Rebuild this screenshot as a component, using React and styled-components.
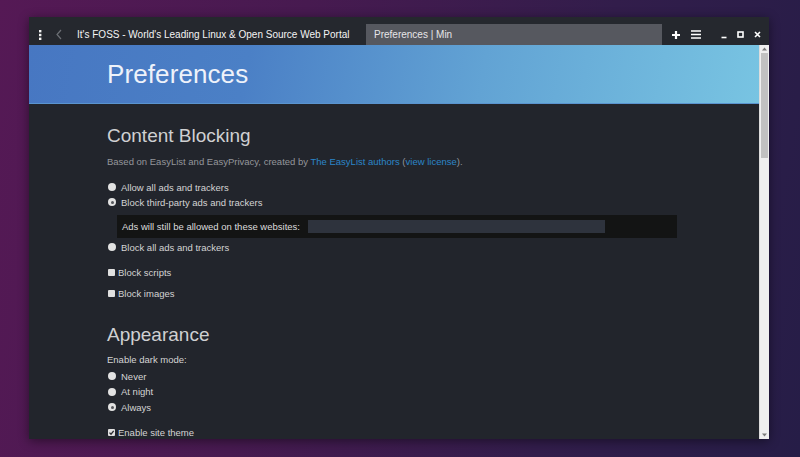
import React from "react";
import styled, { createGlobalStyle } from "styled-components";

const Global = createGlobalStyle`
  html, body { margin: 0; padding: 0; }
  body {
    width: 800px; height: 457px; overflow: hidden;
    font-family: "Liberation Sans", Arial, sans-serif;
  }
  #root { width: 800px; height: 457px; }
`;

const Desktop = styled.div`
  width: 800px; height: 457px; box-sizing: border-box;
  padding: 17px 31px 18px 29px;
  background: linear-gradient(100deg, #551955 0%, #471a50 35%, #321d4b 70%, #261d47 100%);
  display: flex;
`;

const Window = styled.div`
  flex: 1;
  display: flex; flex-direction: column;
  background: #22252c;
  box-shadow: 0 2px 10px rgba(0,0,0,0.45);
  overflow: hidden;
`;

const TitleBar = styled.div`
  height: 28px; flex: none;
  background: #25282e;
  display: flex; align-items: flex-end;
  color: #f2f2f2; font-size: 10px;
`;

const IconBtn = styled.div`
  width: ${p => p.$w || 18}px; height: 21px;
  display: flex; align-items: center; justify-content: center;
  color: ${p => p.$dim ? "#6c6f75" : "#f4f4f4"};
  flex: none;
`;

const Tab = styled.div`
  width: 296px; height: 21px; box-sizing: border-box;
  padding-left: ${p => p.$active ? 8 : 7}px;
  display: flex; align-items: center;
  background: ${p => p.$active ? "#56585f" : "transparent"};
  color: ${p => p.$active ? "#e6e6e8" : "#f4f4f4"};
  white-space: nowrap; overflow: hidden;
  flex: none;
`;

const Spacer = styled.div`
  width: ${p => p.$w}px; flex: none;
`;

const Body = styled.div`
  flex: 1; display: flex; min-height: 0;
`;

const Page = styled.div`
  flex: 1; display: flex; flex-direction: column; overflow: hidden;
`;

const Banner = styled.div`
  height: 58px; flex: none;
  border-bottom: 1px solid #5a94cf;
  background: linear-gradient(100deg, #4777c2 0%, #4b80c6 30%, #62a3d4 62%, #78c4e2 100%);
  padding-left: 78px;
  display: flex; align-items: center;
`;

const PageTitle = styled.h1`
  margin: 0; font-weight: 400; font-size: 26px;
  color: #eef2fa; letter-spacing: 0.1px;
`;

const Content = styled.div`
  padding: 20px 78px 0 78px;
  color: #d6d6d6; font-size: 9.5px;
`;

const Heading = styled.h2`
  margin: 0 0 ${p => p.$mb || 8}px 0;
  font-weight: 400; font-size: 19px; line-height: 24px;
  color: #cfd0d2;
`;

const Desc = styled.p`
  margin: 0 0 13px 0; line-height: 12px;
  color: #94969b;
`;

const Link = styled.a`
  color: #2b85c9; text-decoration: none;
`;

const List = styled.div`
  display: flex; flex-direction: column;
  gap: ${p => p.$gap || 3}px;
  margin-top: ${p => p.$mt || 0}px;
`;

const Row = styled.label`
  display: flex; align-items: center; height: 12px;
  color: #d4d4d4;
`;

const Radio = styled.span`
  width: 8px; height: 8px; border-radius: 50%;
  background: #e2e2e2; flex: none; margin: 0 5px 0 1px;
  display: flex; align-items: center; justify-content: center;
  &::after {
    content: ""; width: 3px; height: 3px; border-radius: 50%;
    background: ${p => p.$on ? "#55575c" : "transparent"};
  }
`;

const Check = styled.span`
  width: 7px; height: 7px; background: #e0e0e0; border-radius: 1px;
  flex: none; margin: 0 3px 0 1px;
  display: flex; align-items: center; justify-content: center;
`;

const AllowBox = styled.div`
  margin: 7px 4px 0 10px;
  height: 23px; background: #131414;
  display: flex; align-items: center;
  padding-left: 5px;
  color: #dcdcdc;
`;

const SiteInput = styled.div`
  width: 297px; height: 13px; margin-left: 8px;
  background: #2e333d;
`;

const Label = styled.div`
  color: #d4d4d4; line-height: 12px;
`;

const ScrollBar = styled.div`
  width: 9px; flex: none; background: #efefef;
  border-left: 1px solid #dcdcdc;
  display: flex; flex-direction: column; align-items: center;
`;

const Arrow = styled.div`
  height: 8px; display: flex; align-items: center; justify-content: center;
  flex: none;
`;

const Thumb = styled.div`
  width: 7px; height: 105px; background: #c1c1c1; flex: none;
`;

const Track = styled.div`
  flex: 1;
`;

const Dots = () => (
  <svg width="4" height="10" viewBox="0 0 4 10">
    <rect x="1" y="0" width="2.4" height="2.4" fill="#f2f2f2" />
    <rect x="1" y="3.8" width="2.4" height="2.4" fill="#f2f2f2" />
    <rect x="1" y="7.6" width="2.4" height="2.4" fill="#f2f2f2" />
  </svg>
);

const Back = () => (
  <svg width="8" height="11" viewBox="0 0 8 11">
    <path d="M6 1 L2 5.5 L6 10" stroke="#6c6f75" strokeWidth="1.2" fill="none" />
  </svg>
);

const Plus = () => (
  <svg width="10" height="10" viewBox="0 0 10 10">
    <path d="M5 1 V9 M1 5 H9" stroke="#fff" strokeWidth="2.2" />
  </svg>
);

const Menu = () => (
  <svg width="10" height="9" viewBox="0 0 10 9">
    <path d="M0 1 H10 M0 4.5 H10 M0 8 H10" stroke="#fff" strokeWidth="1.5" />
  </svg>
);

const Min = () => (
  <svg width="6" height="8" viewBox="0 0 6 8">
    <path d="M0.5 6.5 H5.5" stroke="#fff" strokeWidth="1.6" />
  </svg>
);

const Max = () => (
  <svg width="7" height="7" viewBox="0 0 7 7">
    <rect x="1" y="1" width="5" height="5" stroke="#fff" strokeWidth="1.6" fill="none" />
  </svg>
);

const Close = () => (
  <svg width="7" height="7" viewBox="0 0 7 7">
    <path d="M1 1 L6 6 M6 1 L1 6" stroke="#fff" strokeWidth="1.6" />
  </svg>
);

const Tick = () => (
  <svg width="7" height="7" viewBox="0 0 7 7">
    <path d="M1.5 3.6 L3 5.2 L5.7 1.8" stroke="#2a2c30" strokeWidth="1.3" fill="none" />
  </svg>
);

const Tri = ({ up }) => (
  <svg width="5" height="4" viewBox="0 0 5 4">
    <path d={up ? "M0 3.5 L2.5 0.5 L5 3.5 Z" : "M0 0.5 L2.5 3.5 L5 0.5 Z"} fill="#7a7a7a" />
  </svg>
);

export default function App() {
  return (
    <>
      <Global />
      <Desktop>
        <Window>
          <TitleBar>
            <Spacer $w={3} />
            <IconBtn $w={16}><Dots /></IconBtn>
            <IconBtn $w={22} $dim><Back /></IconBtn>
            <Tab>It's FOSS - World's Leading Linux &amp; Open Source Web Portal</Tab>
            <Tab $active>Preferences | Min</Tab>
            <Spacer $w={5} />
            <IconBtn $w={18}><Plus /></IconBtn>
            <IconBtn $w={22}><Menu /></IconBtn>
            <Spacer $w={8} />
            <IconBtn $w={17}><Min /></IconBtn>
            <IconBtn $w={17}><Max /></IconBtn>
            <IconBtn $w={16}><Close /></IconBtn>
          </TitleBar>
          <Body>
            <Page>
              <Banner>
                <PageTitle>Preferences</PageTitle>
              </Banner>
              <Content>
                <Heading>Content Blocking</Heading>
                <Desc>
                  Based on EasyList and EasyPrivacy, created by <Link>The EasyList authors</Link> (<Link>view license</Link>).
                </Desc>
                <List>
                  <Row><Radio />Allow all ads and trackers</Row>
                  <Row><Radio $on />Block third-party ads and trackers</Row>
                </List>
                <AllowBox>
                  Ads will still be allowed on these websites:
                  <SiteInput />
                </AllowBox>
                <List $mt={3}>
                  <Row><Radio />Block all ads and trackers</Row>
                </List>
                <List $gap={9} $mt={13}>
                  <Row><Check />Block scripts</Row>
                  <Row><Check />Block images</Row>
                </List>
                <List $mt={24}>
                  <Heading $mb={7}>Appearance</Heading>
                </List>
                <Label>Enable dark mode:</Label>
                <List $gap={3.5} $mt={4}>
                  <Row><Radio />Never</Row>
                  <Row><Radio />At night</Row>
                  <Row><Radio $on />Always</Row>
                </List>
                <List $mt={13}>
                  <Row><Check><Tick /></Check>Enable site theme</Row>
                </List>
              </Content>
            </Page>
            <ScrollBar>
              <Arrow><Tri up /></Arrow>
              <Thumb />
              <Track />
              <Arrow><Tri /></Arrow>
            </ScrollBar>
          </Body>
        </Window>
      </Desktop>
    </>
  );
}
